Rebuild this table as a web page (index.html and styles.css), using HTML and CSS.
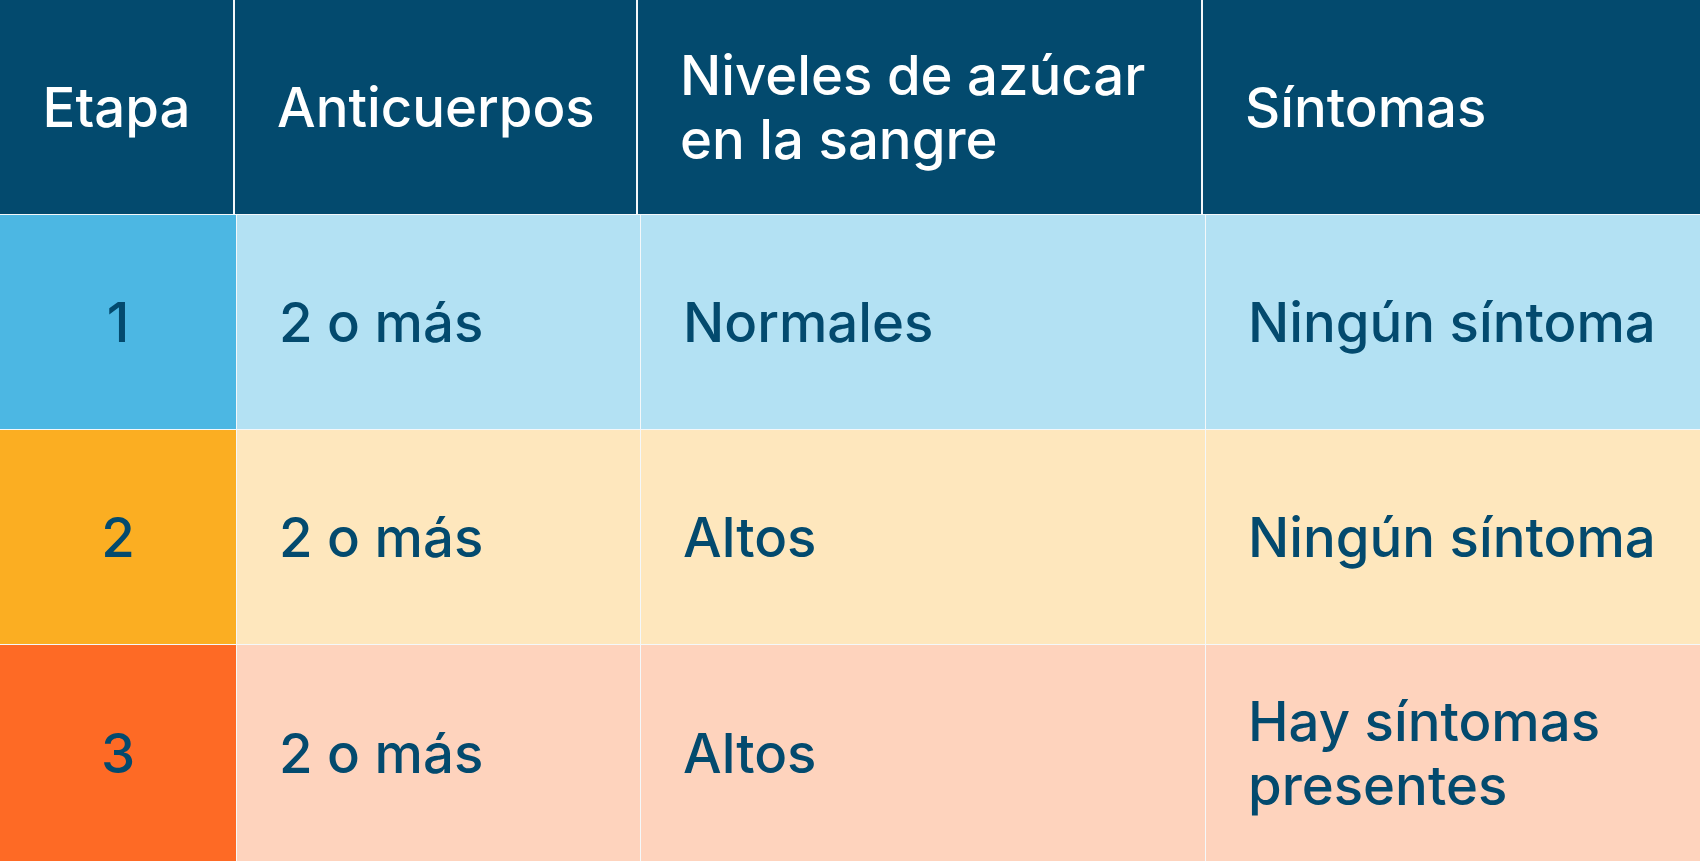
FILE: index.html
```html
<!DOCTYPE html>
<html lang="es">
<head>
<meta charset="utf-8">
<title>Etapas</title>
<link rel="stylesheet" href="styles.css">
</head>
<body>
<div class="table">
  <div class="thead">
    <div class="cell center">Etapa</div>
    <div class="cell">Anticuerpos</div>
    <div class="cell">Niveles de azúcar en la sangre</div>
    <div class="cell">Síntomas</div>
  </div>
  <div class="row stage-1">
    <div class="cell center accent">1</div>
    <div class="cell">2 o más</div>
    <div class="cell">Normales</div>
    <div class="cell">Ningún síntoma</div>
  </div>
  <div class="row stage-2">
    <div class="cell center accent">2</div>
    <div class="cell">2 o más</div>
    <div class="cell">Altos</div>
    <div class="cell">Ningún síntoma</div>
  </div>
  <div class="row stage-3 last">
    <div class="cell center accent">3</div>
    <div class="cell">2 o más</div>
    <div class="cell">Altos</div>
    <div class="cell">Hay síntomas presentes</div>
  </div>
</div>
</body>
</html>
```

FILE: styles.css
```css
html, body {
  margin: 0;
  padding: 0;
}
body {
  font-family: Inter, "Noto Sans", sans-serif;
  background: #ffffff;
}
.table {
  display: flex;
  flex-direction: column;
  gap: 1px;
  height: 100vh;
  background: #f4f8fa;
  overflow: hidden;
}
.thead {
  display: grid;
  grid-template-columns: 233px 401px 563px 1fr;
  column-gap: 2px;
  height: 214px;
  flex: none;
}
.thead .cell {
  background: #034a6e;
  color: #ffffff;
}
.row {
  display: grid;
  grid-template-columns: 236px 403px 564px 1fr;
  column-gap: 1px;
  height: 214px;
  flex: none;
}
.row.last {
  flex: 1;
}
.cell {
  display: flex;
  align-items: center;
  padding: 0 20px 0 42px;
  font-size: 54.5px;
  line-height: 64px;
  font-weight: 500;
  color: #034a6e;
}
.cell.center {
  justify-content: center;
  padding: 0;
}
.stage-1 .cell { background: #b3e1f3; }
.stage-1 .cell.accent { background: #4cb7e3; }
.stage-2 .cell { background: #fee7bd; }
.stage-2 .cell.accent { background: #fbae22; }
.stage-3 .cell { background: #fed3bd; }
.stage-3 .cell.accent { background: #fe6a25; }
```
